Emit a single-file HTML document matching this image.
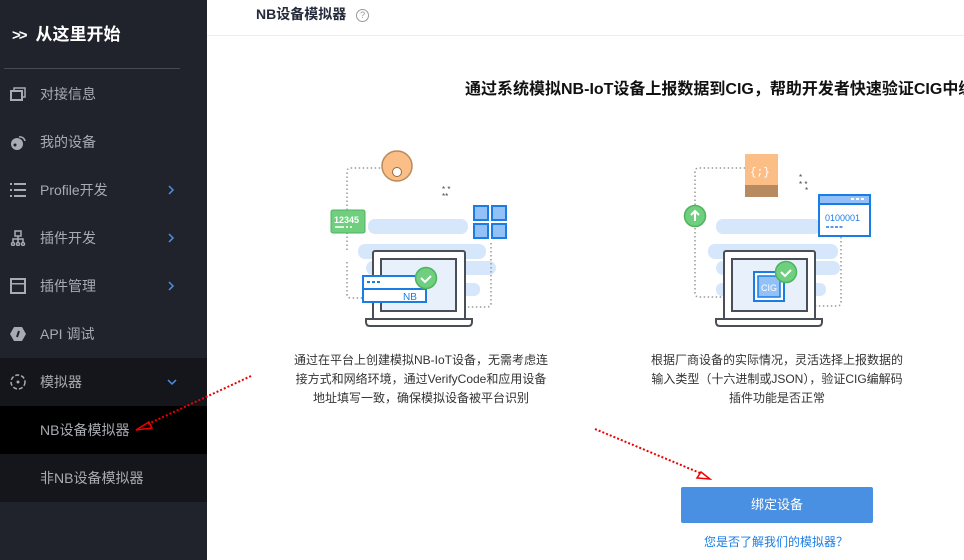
<!DOCTYPE html>
<html><head><meta charset="utf-8"><style>
*{margin:0;padding:0;box-sizing:border-box}
html,body{width:964px;height:560px;overflow:hidden}
body{background:#fff;font-family:"Liberation Sans","Noto Sans CJK SC",sans-serif;position:relative}
#sb{position:absolute;left:0;top:0;width:207px;height:560px;background:#20232b}
.hd{position:absolute;left:12px;top:20px;color:#fff;font-size:17px;font-weight:bold}
.dv{position:absolute;left:4px;top:68px;width:176px;height:1px;background:#464a53}
.it{position:absolute;left:0;width:207px;height:48px;line-height:48px;color:#a8abb2;font-size:14px;padding-left:40px}
.ic{position:absolute;left:10px;top:16px;width:16px;height:16px}
.ar{position:absolute;left:167px;top:19px;width:8px;height:10px}
.t{position:absolute;white-space:nowrap}
</style></head><body>
<div id="sb">
<div class="hd"><span style="font-size:15px;letter-spacing:-2px;margin-right:10px">&gt;&gt;</span>从这里开始</div>
<div class="dv"></div>
<div class="it" style="top:70px"><svg class="ic" viewBox="0 0 16 16"><rect x="1" y="5" width="11" height="9" fill="none" stroke="#a8abb2" stroke-width="2"/><path d="M4 4V2h11v9h-2" fill="none" stroke="#a8abb2" stroke-width="1.5"/></svg>对接信息</div>
<div class="it" style="top:118px"><svg class="ic" viewBox="0 0 16 16"><circle cx="7" cy="10" r="6" fill="#a8abb2"/><path d="M9 3a5 5 0 0 1 6 4" fill="none" stroke="#a8abb2" stroke-width="1.5"/><circle cx="5" cy="11" r="1.5" fill="#20232b"/></svg>我的设备</div>
<div class="it" style="top:166px"><svg class="ic" viewBox="0 0 16 16" fill="#a8abb2"><rect x="0" y="1" width="2" height="2"/><rect x="4" y="1" width="12" height="2"/><rect x="0" y="7" width="2" height="2"/><rect x="4" y="7" width="12" height="2"/><rect x="0" y="13" width="2" height="2"/><rect x="4" y="13" width="12" height="2"/></svg>Profile开发<svg class="ar" viewBox="0 0 8 10"><path d="M2 1l4 4-4 4" fill="none" stroke="#4a90e2" stroke-width="1.5"/></svg></div>
<div class="it" style="top:214px"><svg class="ic" viewBox="0 0 16 16" fill="none" stroke="#a8abb2" stroke-width="1.5"><rect x="5" y="1" width="6" height="5"/><path d="M8 6v3M3 12V9h10v3M8 9v3"/><circle cx="3" cy="14" r="1.5"/><circle cx="8" cy="14" r="1.5"/><circle cx="13" cy="14" r="1.5"/></svg>插件开发<svg class="ar" viewBox="0 0 8 10"><path d="M2 1l4 4-4 4" fill="none" stroke="#4a90e2" stroke-width="1.5"/></svg></div>
<div class="it" style="top:262px"><svg class="ic" viewBox="0 0 16 16"><rect x="1" y="1" width="14" height="14" fill="none" stroke="#a8abb2" stroke-width="2"/><rect x="1" y="5" width="14" height="1.5" fill="#a8abb2"/></svg>插件管理<svg class="ar" viewBox="0 0 8 10"><path d="M2 1l4 4-4 4" fill="none" stroke="#4a90e2" stroke-width="1.5"/></svg></div>
<div class="it" style="top:310px"><svg class="ic" viewBox="0 0 16 16"><path d="M4 1h8l4 7-4 7H4L0 8z" fill="#a8abb2"/><path d="M9 5l-2 6" stroke="#20232b" stroke-width="2"/></svg>API 调试</div>
<div class="it" style="top:358px;background:#15161b"><svg class="ic" viewBox="0 0 16 16"><circle cx="8" cy="8" r="7" fill="none" stroke="#a8abb2" stroke-width="1.5" stroke-dasharray="4 2"/><circle cx="8" cy="8" r="1.5" fill="#a8abb2"/></svg>模拟器<svg class="ar" style="width:10px;height:8px;top:20px" viewBox="0 0 10 8"><path d="M1 2l4 4 4-4" fill="none" stroke="#4a90e2" stroke-width="1.5"/></svg></div>
<div class="it" style="top:406px;background:#000">NB设备模拟器</div>
<div class="it" style="top:454px;background:#15161b">非NB设备模拟器</div>
</div>
<div class="t" style="left:256px;top:4px;font-size:14px;font-weight:bold;color:#252b3a">NB设备模拟器 <span style="display:inline-block;width:13px;height:13px;border:1px solid #999;border-radius:50%;font-size:9px;line-height:11px;text-align:center;color:#999;font-weight:normal;margin-left:6px;vertical-align:1px">?</span></div>
<div style="position:absolute;left:207px;top:35px;width:757px;height:1px;background:#eee"></div>
<div style="position:absolute;left:207px;top:70px;width:757px;height:30px;overflow:hidden"><div class="t" style="left:258px;top:5px;font-size:16px;font-weight:bold;color:#111">通过系统模拟NB-IoT设备上报数据到CIG，帮助开发者快速验证CIG中编解码插件</div></div>
<svg style="position:absolute;left:0;top:0" width="964" height="560">
<g fill="#d6e6fb"><rect x="368" y="219" width="100" height="15" rx="7"/><rect x="358" y="244" width="128" height="15" rx="7"/><rect x="366" y="261" width="130" height="14" rx="7"/><rect x="380" y="283" width="100" height="13" rx="6"/>
<rect x="716" y="219" width="105" height="15" rx="7"/><rect x="708" y="244" width="130" height="15" rx="7"/><rect x="716" y="261" width="124" height="14" rx="7"/><rect x="716" y="283" width="110" height="13" rx="6"/></g>
<g fill="none" stroke="#999" stroke-width="1.5" stroke-dasharray="1.5 2.5"><path d="M347 250V172q0-4 4-4h31"/><path d="M347 262v32q0 4 4 4h12"/><path d="M491 243v60q0 4-4 4h-22"/><path d="M695 205V172q0-4 4-4h46"/><path d="M695 228v65q0 4 4 4h25"/><path d="M841 237v65q0 4-4 4h-22"/></g>
<circle cx="397" cy="166" r="15" fill="#fbbe86" stroke="#b98a5c" stroke-width="1.5"/><circle cx="397" cy="172" r="4.5" fill="#fff" stroke="#9b6a3c"/>
<rect x="331" y="210" width="34" height="23" rx="2" fill="#6fcf7f" stroke="#4db35f"/><text x="334" y="223" font-size="9" font-weight="bold" fill="#fff" font-family="Liberation Sans">12345</text><path d="M335 227h9M346 227h2M350 227h2" stroke="#fff" stroke-width="1.5"/>
<g fill="#93c0f6" stroke="#1a7de6" stroke-width="2"><rect x="474" y="206" width="14" height="14"/><rect x="492" y="206" width="14" height="14"/><rect x="474" y="224" width="14" height="14"/><rect x="492" y="224" width="14" height="14"/></g>
<text x="442" y="192" font-size="8" fill="#444">* *</text><text x="442" y="199" font-size="8" fill="#444">**</text>
<rect x="373" y="251" width="92" height="69" rx="2" fill="#fff" stroke="#4a4f57" stroke-width="2"/><rect x="381" y="259" width="75" height="52" fill="#e8f0fc" stroke="#4a4f57" stroke-width="2"/><path d="M366 319h106v3q0 4-4 4h-98q-4 0-4-4z" fill="#fff" stroke="#4a4f57" stroke-width="2"/>
<rect x="363" y="276" width="63" height="26" fill="#fff" stroke="#1a7de6" stroke-width="2"/><path d="M363 289h63" stroke="#1a7de6" stroke-width="2"/><path d="M367 282h3M372 282h3M377 282h3" stroke="#1a7de6" stroke-width="2"/><text x="403" y="300" font-size="10" fill="#1a7de6" font-family="Liberation Sans">NB</text>
<circle cx="426" cy="278" r="10.5" fill="#6fcf7f" stroke="#4db35f" stroke-width="1.5"/><path d="M421 278l4 4 6-6" stroke="#fff" stroke-width="2" fill="none"/>
<rect x="745" y="154" width="33" height="31" fill="#fbbe86"/><rect x="745" y="185" width="33" height="12" fill="#b88a5f"/><text x="750" y="175" font-size="11" fill="#fff" font-family="Liberation Mono">{;}</text>
<circle cx="695" cy="216" r="10.5" fill="#6fcf7f" stroke="#4db35f" stroke-width="1.5"/><path d="M695 221v-9M691 215l4-4 4 4" stroke="#fff" stroke-width="2" fill="none"/>
<text x="799" y="180" font-size="8" fill="#444">*</text><text x="799" y="187" font-size="8" fill="#444">* *</text><text x="805" y="193" font-size="8" fill="#444">*</text>
<rect x="819" y="195" width="51" height="41" fill="#fff" stroke="#1a7de6" stroke-width="2"/><rect x="819" y="195" width="51" height="9" fill="#93c0f6" stroke="#1a7de6" stroke-width="2"/><path d="M851 199h3M856 199h3M861 199h3" stroke="#fff" stroke-width="2"/><text x="825" y="221" font-size="9" fill="#1a7de6" font-family="Liberation Sans">0100001</text><path d="M826 227h18" stroke="#1a7de6" stroke-width="1.5" stroke-dasharray="3 1.5"/>
<rect x="724" y="251" width="91" height="69" rx="2" fill="#fff" stroke="#4a4f57" stroke-width="2"/><rect x="732" y="259" width="75" height="52" fill="#e8f0fc" stroke="#4a4f57" stroke-width="2"/><path d="M716 319h106v3q0 4-4 4h-98q-4 0-4-4z" fill="#fff" stroke="#4a4f57" stroke-width="2"/>
<rect x="754" y="272" width="30" height="29" fill="#fff" stroke="#1a7de6" stroke-width="2"/><rect x="758" y="276" width="22" height="21" fill="#93c0f6" stroke="#1a7de6" stroke-width="1.5"/><text x="761" y="291" font-size="9" fill="#fff" font-family="Liberation Sans">CIG</text>
<circle cx="786" cy="272" r="10.5" fill="#6fcf7f" stroke="#4db35f" stroke-width="1.5"/><path d="M781 272l4 4 6-6" stroke="#fff" stroke-width="2" fill="none"/>
<path d="M251 376L148 424" stroke="#e00" stroke-width="2" stroke-dasharray="2 2"/><path d="M136 430l13-8 3 6z" fill="none" stroke="#e00" stroke-width="1.5"/>
<path d="M595 429L700 473" stroke="#e00" stroke-width="2" stroke-dasharray="2 2"/><path d="M710 479l-13-1 4-6z" fill="none" stroke="#e00" stroke-width="1.5"/>
</svg>
<div class="t" style="left:255px;top:351px;width:332px;text-align:center;font-size:12px;line-height:19px;color:#333">通过在平台上创建模拟NB-IoT设备，无需考虑连<br>接方式和网络环境，通过VerifyCode和应用设备<br>地址填写一致，确保模拟设备被平台识别</div>
<div class="t" style="left:611px;top:351px;width:332px;text-align:center;font-size:12px;line-height:19px;color:#333">根据厂商设备的实际情况，灵活选择上报数据的<br>输入类型（十六进制或JSON），验证CIG编解码<br>插件功能是否正常</div>
<div style="position:absolute;left:681px;top:487px;width:192px;height:36px;background:#4a90e2;border-radius:2px;color:#fff;font-size:13px;text-align:center;line-height:36px">绑定设备</div>
<div class="t" style="left:704px;top:533px;font-size:12px;color:#1a7de6">您是否了解我们的模拟器？</div>
</body></html>
